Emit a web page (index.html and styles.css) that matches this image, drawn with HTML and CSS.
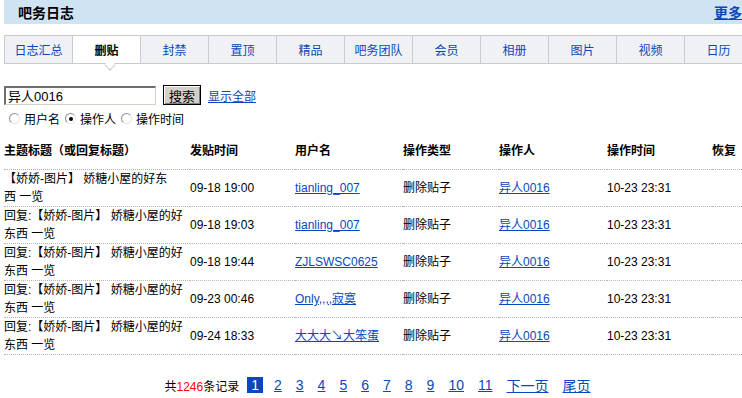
FILE: index.html
```html
<!DOCTYPE html>
<html lang="zh-CN">
<head>
    <meta charset="UTF-8">
    <title>吧务日志</title>
    <link rel="stylesheet" href="styles.css">
</head>
<body>
    <div class="page">
        <div class="title-bar">
            <h2>吧务日志</h2>
            <a href="#" class="more">更多</a>
        </div>

        <ul class="tabs">
            <li><a href="#">日志汇总</a></li>
            <li class="active"><a href="#">删贴</a></li>
            <li><a href="#">封禁</a></li>
            <li><a href="#">置顶</a></li>
            <li><a href="#">精品</a></li>
            <li><a href="#">吧务团队</a></li>
            <li><a href="#">会员</a></li>
            <li><a href="#">相册</a></li>
            <li><a href="#">图片</a></li>
            <li><a href="#">视频</a></li>
            <li><a href="#">日历</a></li>
        </ul>

        <form class="search">
            <div class="search-row">
                <input type="text" class="search-input" value="异人0016">
                <button type="button" class="search-btn">搜索</button>
                <a href="#">显示全部</a>
            </div>
            <div class="radio-row">
                <label><span class="radio"></span>用户名</label>
                <label><span class="radio checked"></span>操作人</label>
                <label><span class="radio"></span>操作时间</label>
            </div>
        </form>

        <table class="log">
            <thead>
                <tr>
                    <th class="c-title">主题标题（或回复标题）</th>
                    <th class="c-time">发贴时间</th>
                    <th class="c-user">用户名</th>
                    <th class="c-type">操作类型</th>
                    <th class="c-op">操作人</th>
                    <th class="c-optime">操作时间</th>
                    <th>恢复</th>
                </tr>
            </thead>
            <tbody>
                <tr>
                    <td>【娇娇-图片】 娇糖小屋的好东<br>西 一览</td>
                    <td>09-18 19:00</td>
                    <td><a href="#">tianling_007</a></td>
                    <td>删除贴子</td>
                    <td><a href="#">异人0016</a></td>
                    <td>10-23 23:31</td>
                    <td></td>
                </tr>
                <tr>
                    <td>回复:【娇娇-图片】 娇糖小屋的好<br>东西 一览</td>
                    <td>09-18 19:03</td>
                    <td><a href="#">tianling_007</a></td>
                    <td>删除贴子</td>
                    <td><a href="#">异人0016</a></td>
                    <td>10-23 23:31</td>
                    <td></td>
                </tr>
                <tr>
                    <td>回复:【娇娇-图片】 娇糖小屋的好<br>东西 一览</td>
                    <td>09-18 19:44</td>
                    <td><a href="#">ZJLSWSC0625</a></td>
                    <td>删除贴子</td>
                    <td><a href="#">异人0016</a></td>
                    <td>10-23 23:31</td>
                    <td></td>
                </tr>
                <tr>
                    <td>回复:【娇娇-图片】 娇糖小屋的好<br>东西 一览</td>
                    <td>09-23 00:46</td>
                    <td><a href="#">Only,,,,寂寞</a></td>
                    <td>删除贴子</td>
                    <td><a href="#">异人0016</a></td>
                    <td>10-23 23:31</td>
                    <td></td>
                </tr>
                <tr>
                    <td>回复:【娇娇-图片】 娇糖小屋的好<br>东西 一览</td>
                    <td>09-24 18:33</td>
                    <td><a href="#">大大大↘大笨蛋</a></td>
                    <td>删除贴子</td>
                    <td><a href="#">异人0016</a></td>
                    <td>10-23 23:31</td>
                    <td></td>
                </tr>
            </tbody>
        </table>

        <div class="pager">
            <span class="total">共<em>1246</em>条记录</span>
            <span class="cur">1</span>
            <a href="#">2</a>
            <a href="#">3</a>
            <a href="#">4</a>
            <a href="#">5</a>
            <a href="#">6</a>
            <a href="#">7</a>
            <a href="#">8</a>
            <a href="#">9</a>
            <a href="#">10</a>
            <a href="#">11</a>
            <a href="#">下一页</a>
            <a href="#">尾页</a>
        </div>
    </div>
</body>
</html>
```

FILE: styles.css
```css
html, body {
    margin: 0;
    padding: 0;
    overflow: hidden;
}
body {
    font-family: "Liberation Sans", "Noto Sans CJK SC", sans-serif;
    font-size: 12px;
    color: #000;
    background: #fff;
}
a {
    color: #0c46bd;
}

.page {
    width: 750px;
    margin-left: 4px;
}

/* title */
.title-bar {
    height: 24px;
    background-color: #d0e3f3;
    display: flex;
    align-items: center;
    justify-content: space-between;
    padding: 0 12px 0 14px;
}
.title-bar h2 {
    margin: 0;
    font-size: 14px;
    font-weight: bold;
}
.title-bar .more {
    font-size: 14px;
    font-weight: bold;
}

/* tabs */
.tabs {
    list-style: none;
    margin: 11px 0 0 0;
    padding: 0;
    display: flex;
    height: 27px;
    border-top: 1px solid #cbcbcb;
    border-bottom: 1px solid #cbcbcb;
    border-left: 1px solid #cbcbcb;
    width: 747px;
}
.tabs li {
    flex: 0 0 67px;
    border-right: 1px solid #cbcbcb;
    background-color: #eff1f4;
    display: flex;
    align-items: center;
    justify-content: center;
    position: relative;
}
.tabs li a {
    text-decoration: none;
    color: #0c46bd;
}
.tabs li.active {
    background-color: #fff;
}
.tabs li.active a {
    color: #000;
    font-weight: bold;
}
.tabs li.active::after {
    content: "";
    position: absolute;
    left: 33px;
    bottom: -6px;
    width: 7px;
    height: 7px;
    background: #fff;
    border-right: 1px solid #cbcbcb;
    border-bottom: 1px solid #cbcbcb;
    transform: rotate(45deg);
}

/* search */
.search {
    margin: 21px 0 0 0;
}
.search-row {
    display: flex;
    align-items: center;
    height: 20px;
}
.search-input {
    width: 145px;
    height: 14px;
    margin: 0;
    padding: 1px 2px;
    font-family: inherit;
    font-size: 13px;
    border-top: 2px solid #6f6f6f;
    border-left: 2px solid #6f6f6f;
    border-right: 1px solid #d4d0c8;
    border-bottom: 1px solid #d4d0c8;
    outline: none;
}
.search-btn {
    margin: 0 7px 0 7px;
    width: 38px;
    height: 20px;
    padding: 0;
    font-family: inherit;
    font-size: 13px;
    background: #d4d0c8;
    border: 1px solid #000;
    box-shadow: inset 1px 1px 0 #fff, inset -1px -1px 0 #808080;
}
.radio-row {
    display: flex;
    gap: 5px;
    margin-top: 5px;
    padding-left: 5px;
}
.radio-row label {
    display: flex;
    align-items: center;
}
.radio {
    width: 9px;
    height: 9px;
    border-radius: 50%;
    border: 1px solid #8d8d8d;
    border-right-color: #e6e6e6;
    border-bottom-color: #e6e6e6;
    background: #fff;
    margin-right: 4px;
    position: relative;
}
.radio.checked::after {
    content: "";
    position: absolute;
    left: 2.5px;
    top: 2.5px;
    width: 4px;
    height: 4px;
    border-radius: 50%;
    background: #000;
}

/* table */
.log {
    border-collapse: collapse;
    margin-top: 10px;
    width: 750px;
}
.log th {
    text-align: left;
    font-weight: bold;
    height: 18px;
    line-height: 18px;
    padding: 5px 0 9px 0;
    border-bottom: 1px dotted #b5b5b5;
}
.log td {
    height: 36px;
    padding: 0;
    line-height: 18px;
    vertical-align: middle;
    border-bottom: 1px dotted #b5b5b5;
}
.c-title { width: 186px; }
.c-time { width: 105px; }
.c-user { width: 108px; }
.c-type { width: 96px; }
.c-op { width: 108px; }
.c-optime { width: 105px; }

/* pager */
.pager {
    display: flex;
    justify-content: center;
    align-items: center;
    gap: 8px;
    margin-top: 20px;
    font-size: 14px;
}
.pager .total {
    font-size: 12px;
}
.pager em {
    font-style: normal;
    color: #f00;
}
.pager .cur {
    background: #0c46bd;
    color: #fff;
    padding: 0 4px;
    line-height: 16px;
}
.pager a {
    padding: 0 3px;
}
```
